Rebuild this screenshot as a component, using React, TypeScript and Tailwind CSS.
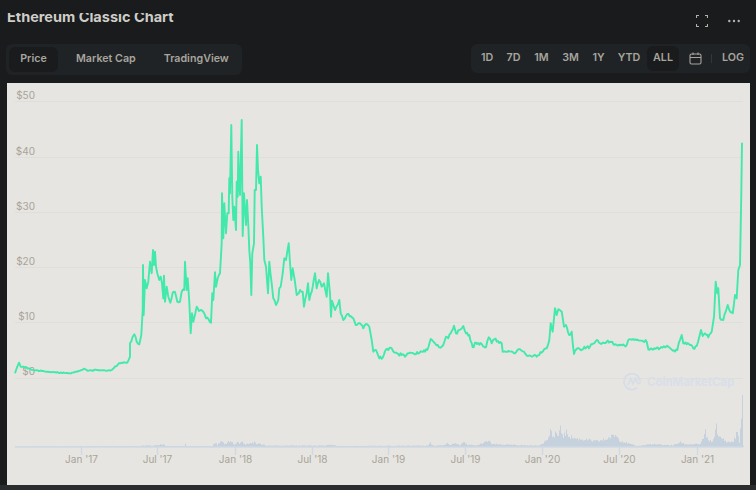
const p5 = [0,700,8,680,13,673,20,695,28,703,34,675,38,600,39,465,41,615,45,510,50,535,55,515,60,455,65,490,69,420,72,465,75,425,78,470,82,490,88,510,92,500,96,520,100,565,102,497,105,575,110,530,115,560,121,578,128,548,135,546,142,575,150,575,155,545,163,540,165,455,170,540,173,505,178,575,182,670,186,610,190,635,196,610,200,590,207,603,212,600,220,605,228,625,236,628,243,638,247,550,250,570,255,487,258,530,263,505,270,490,275,400,276,250,280,385,283,280,288,370,292,310,296,310,298,205,300,250,304,45,307,260,310,330,313,290,318,360,320,215,323,260,325,125,327,210,330,255,335,30,338,378,342,250,348,345,351,270,355,345,358,420,361,460,364,555,367,430,372,400,374,240,378,240,381,105,384,180,388,220,392,200,395,290,400,380,403,450,408,470,414,550,418,455,425,520,430,565,438,585,445,570,448,535,452,530,458,490,463,445,468,450,476,400,484,510,488,475,494,510,500,555,510,540,518,545,522,590,530,550,534,520,538,570,545,545,555,490,560,535,567,510,575,530,582,520,590,560,594,490,600,550,603,620,606,572,615,600,628,570];
const p6 = [2,70,10,90,22,72,40,85,47,105,60,100,70,115,78,102,88,110,95,150,100,185,108,180,118,205,128,203,138,178,155,175,165,188,185,195,195,200,210,188,225,193,245,185,262,180,272,147,285,160,297,172,310,165,318,140,325,145,332,130,342,107,348,130,358,120,370,108,378,130,388,135,398,172,408,158,425,162,438,172,446,142,455,160,463,148,485,160,488,185,505,183,522,190,540,178,552,185,565,198,590,200,605,188,620,175,628,150,632,100,638,125,645,55,650,75,655,58,665,65,672,110,678,105,688,135,695,125,702,192,712,175];
const p4 = [240,28,270,20,290,0,300,10,330,5,350,15,380,15,385,0,410,0,440,5,445,28,480,25];
const p7 = [0,655,15,652,25,650,38,662,52,660,56,640,65,615,70,640,90,645,100,655,110,648,118,620,123,600,128,618,135,610,145,622,155,605,162,560,167,455,172,490,175,475,180,565,190,570,197,545,203,525,208,540,218,550,225,495,230,505,235,420,240,405,244,190,246,38];
const p3 = [45,100,50,85,57,68,62,80,70,80,100,90,150,96,210,100,240,92,252,86,262,92,290,90,320,92,335,90,355,72,365,68,382,68,390,50];

const rnd = (i: number) => {
  const s = Math.sin(i * 12.9898) * 43758.5453;
  return s - Math.floor(s);
};
const toPx = (arr: number[], ox: number, oy: number) => {
  const out: [number, number][] = [];
  for (let i = 0; i < arr.length; i += 2) out.push([ox + arr[i] / 3, oy + arr[i + 1] / 3]);
  return out;
};
const base = [...toPx(p3, 0, 340), ...toPx(p5, 130, 110), ...toPx(p6, 340, 290), ...toPx(p4, 500, 340), ...toPx(p7, 660, 130)];
const dense: string[] = [];
base.forEach(([x, y], i) => {
  dense.push(`${x.toFixed(1)},${y.toFixed(1)}`);
  const next = base[i + 1];
  if (!next) return;
  const steps = Math.floor((next[0] - x) / 1.1);
  for (let k = 1; k < steps; k++) {
    const f = k / steps;
    const xx = x + (next[0] - x) * f;
    const amp = x > 125 ? 1.5 : 0.5;
    const yy = y + (next[1] - y) * f + (rnd(i * 31 + k) - 0.5) * 2 * amp;
    dense.push(`${xx.toFixed(1)},${yy.toFixed(1)}`);
  }
});
const line = dense.join(" ");

const volBase = 447;
const vol: [number, number][] = [
  [15,446.5],[140,446],[143,445.5],[154,445.5],[164,444],[165,446],[184,446],[185,442.5],[186,446],[212,446],[213,444.5],[215,442.5],[217,445],[221.5,440],[224,444],[228,441.5],[232,442],[234,445],[237,441],[239,443.5],[242,441],[245,444.5],[254,442],[256,444.5],[258,442.5],[262,444.5],[266,445.5],[290,445.5],[305,445.5],[325,445.5],[328,445],[332,445],[338,446],[428,445.5],[430,442.5],[433,445.5],[445,445],[447,443],[450,445],[455,443],[460,445],[463,442],[467,444.5],[476,445.5],[488,440.5],[492,444],[502,444.5],[538,445.5],[542,443],[548,438],[550,428],[552,438],[555,431],[558,436],[560,428],[563,435],[566,432],[570,436],[575,438],[585,439],[595,441],[605,439],[615,434],[620,440],[630,444],[637,446],[650,444],[670,445],[673,445],[680,442],[685,444],[700,444],[703,437],[705,431],[708,441],[713,440],[716,422],[718,437],[722,438],[727,442],[733,441],[737,431],[739,441],[741,418],[742,395],[743,446],
];
const volumePts: string[] = [`15,${volBase}`];
for (let x = 15; x <= 743; x++) {
  let j = 0;
  while (j < vol.length - 2 && vol[j + 1][0] < x) j++;
  const [x0, y0] = vol[j];
  const [x1, y1] = vol[j + 1];
  const h = volBase - (y0 + (y1 - y0) * Math.min(1, Math.max(0, (x - x0) / (x1 - x0))));
  const hh = h * (0.7 + 0.45 * rnd(x));
  const top = (volBase - (x === 742 ? 52 : hh)).toFixed(1);
  volumePts.push(`${x},${top}`, `${x + 1},${top}`);
}
volumePts.push(`744,${volBase}`);
const volume = volumePts.join(" ");

const yTicks = [
  { y: 101, t: "$50", ty: 99 }, { y: 157, t: "$40", ty: 155 }, { y: 212, t: "$30", ty: 210 },
  { y: 267, t: "$20", ty: 265 }, { y: 322, t: "$10", ty: 320 }, { y: 378, t: "$0", ty: 375 },
];
const xTicks = [
  { x: 81.5, t: "Jan '17" }, { x: 157.5, t: "Jul '17" }, { x: 235.5, t: "Jan '18" }, { x: 312.5, t: "Jul '18" },
  { x: 388.5, t: "Jan '19" }, { x: 465.5, t: "Jul '19" }, { x: 542.5, t: "Jan '20" }, { x: 619.5, t: "Jul '20" }, { x: 697.5, t: "Jan '21" },
];
const ranges = [
  { t: "1D", c: "w-[26px] text-center" },
  { t: "7D", c: "w-[27px] text-center" },
  { t: "1M", c: "w-[29px] text-center" },
  { t: "3M", c: "w-[29px] text-center" },
  { t: "1Y", c: "w-[27px] text-center" },
  { t: "YTD", c: "w-[34px] text-center" },
];

export default function App() {
  return (
    <div className="w-[756px] h-[490px] overflow-hidden bg-[#191b1d] font-['Inter',sans-serif] flex flex-col">
      <div className="h-[44px] shrink-0 flex pl-[7px] pr-[16px]">
        <div className="mt-[13px] h-[10px] overflow-hidden">
          <div className="-mt-[6px] text-[14.5px] leading-[20px] font-bold text-[#cfcdc7] whitespace-nowrap">Ethereum Classic Chart</div>
        </div>
        <div className="ml-auto flex items-center h-[41px] gap-[20px]">
          <svg width="12" height="12" viewBox="0 0 12 12" fill="none" stroke="#b5b1a8" strokeWidth="1.1">
            <path d="M.5 3V.5H3M9 .5h2.5V3M11.5 9v2.5H9M3 11.5H.5V9" />
          </svg>
          <svg width="12" height="4" viewBox="0 0 12 4" fill="#b5b1a8">
            <circle cx="1.3" cy="2" r="1.2" /><circle cx="6" cy="2" r="1.2" /><circle cx="10.7" cy="2" r="1.2" />
          </svg>
        </div>
      </div>
      <div className="h-[39px] shrink-0 flex items-start justify-between pl-[6px] pr-[6px] text-[10.7px] font-semibold text-[#a8a59d]">
        <div className="h-[31px] w-[236px] flex items-center rounded-[6px] bg-[#1f2325] pl-[3px]">
          <div className="h-[25px] w-[49px] flex items-center justify-center rounded-[6px] bg-[#191b1d]">Price</div>
          <div className="ml-[18px] whitespace-nowrap">Market Cap</div>
          <div className="ml-[28px] whitespace-nowrap">TradingView</div>
        </div>
        <div className="h-[29px] w-[279px] flex items-center rounded-[6px] bg-[#1f2325] pl-[3px]">
          {ranges.map((r) => (
            <div key={r.t} className={r.c}>{r.t}</div>
          ))}
          <div className="ml-[1px] h-[25px] w-[32px] flex items-center justify-center rounded-[6px] bg-[#191b1d]">ALL</div>
          <svg className="ml-[10px]" width="13" height="13" viewBox="0 0 13 13" fill="none" stroke="#a8a59d" strokeWidth="1.1">
            <rect x="1" y="2" width="11" height="10" rx="1.5" /><path d="M1 5.5h11M4 0.5v2.5M9 0.5v2.5" />
          </svg>
          <div className="ml-[9px] h-[9px] w-px bg-[#33373a]" />
          <div className="ml-[10px] -mt-[1px]">LOG</div>
        </div>
      </div>
      <div className="flex-1 flex pl-[7px] pr-[6px]">
        <div className="flex-1 bg-[#e6e5e1]">
          <svg width="743" height="402" viewBox="7 83 743 402" className="block font-['Inter',sans-serif]">
            {yTicks.map((t) => (
              <g key={t.t}>
                <line x1="15" x2="743" y1={t.y + 0.5} y2={t.y + 0.5} stroke="#dfdeda" />
                <text x="35" y={t.ty} fontSize="10" fill="#a8a498" textAnchor="end">{t.t}</text>
              </g>
            ))}
            <polygon points={volume} fill="#c6d1de" />
            <line x1="15" x2="743" y1="447" y2="447" stroke="#cfd8e3" strokeWidth="1.5" />
            {xTicks.map((t) => (
              <g key={t.t}>
                <line x1={t.x} x2={t.x} y1="447" y2="455" stroke="#cfd8e3" strokeWidth="1.3" />
                <text x={t.x} y="463" fontSize="10" fill="#a8a498" textAnchor="middle">{t.t}</text>
              </g>
            ))}
            <g stroke="#d6dde8" fill="none" strokeWidth="1.8">
              <path d="M640 381.500a8 8 0 1 0-3 6.300" />
              <path d="M628 385l2.800-6.500 2.200 5.500 2.700-5.500 2 4.500q1.200 1.500 2.800-.5" strokeWidth="1.6" />
            </g>
            <text x="647" y="386" fontSize="11.4" fontWeight="700" fill="#d8dfe9">CoinMarketCap</text>
            <polyline points={line} fill="none" stroke="#42e9aa" strokeWidth="1.9" strokeLinejoin="round" />
          </svg>
        </div>
      </div>
      <div className="h-[5px] shrink-0 bg-[#2b2c2d]" />
    </div>
  );
}
